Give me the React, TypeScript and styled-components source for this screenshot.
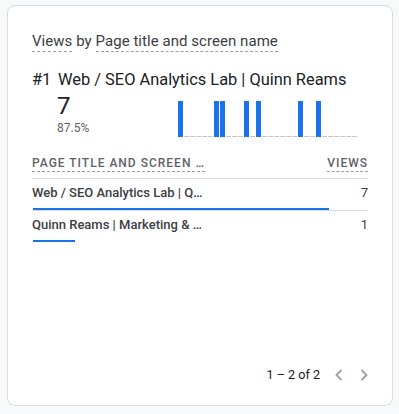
import styled, { createGlobalStyle } from 'styled-components';

const GlobalStyle = createGlobalStyle`
  body {
    margin: 0;
    background: #f8f9fa;
    font-family: Roboto, "Liberation Sans", sans-serif;
  }
`;

const rows = [
  { title: 'Web / SEO Analytics Lab | Quinn Reams', views: 7 },
  { title: 'Quinn Reams | Marketing & Analytics Portfolio', views: 1 },
];

const slots = 30;
const activeSlots = [0, 6, 7, 11, 13, 20, 23];

function Chevron({ dir }: { dir: 'left' | 'right' }) {
  return (
    <svg width="8" height="12" viewBox="0 0 8 12">
      <path
        d={dir === 'left' ? 'M6.5 1 L1.5 6 L6.5 11' : 'M1.5 1 L6.5 6 L1.5 11'}
        fill="none"
        stroke="#9aa0a6"
        strokeWidth="1.8"
      />
    </svg>
  );
}

export default function App() {
  const max = Math.max(...rows.map((r) => r.views));
  return (
    <Page>
      <GlobalStyle />
      <Card>
        <Title>
          <Dotted>Views</Dotted> by <Dotted>Page title and screen name</Dotted>
        </Title>
        <TopLine>
          <Rank>#1</Rank>
          <TopName>{rows[0].title}</TopName>
        </TopLine>
        <Summary>
          <Stats>
            <BigNumber>7</BigNumber>
            <Percent>87.5%</Percent>
          </Stats>
          <Chart>
            {Array.from({ length: slots }).map((_, i) => (
              <Slot key={i} active={activeSlots.includes(i)} />
            ))}
          </Chart>
        </Summary>
        <Table>
          <HeaderRow>
            <HeaderCell>
              <Dotted>Page title and screen …</Dotted>
            </HeaderCell>
            <HeaderCell>
              <Dotted>Views</Dotted>
            </HeaderCell>
          </HeaderRow>
          {rows.map((r, i) => (
            <Row key={r.title} last={i === rows.length - 1}>
              <RowLine>
                <RowName title={r.title}>{r.title}</RowName>
                <RowValue>{r.views}</RowValue>
              </RowLine>
              <Bar style={{ width: `${(r.views / max) * 88}%` }} />
            </Row>
          ))}
        </Table>
        <Pager>
          <PagerText>1 – 2 of 2</PagerText>
          <PagerButton>
            <Chevron dir="left" />
          </PagerButton>
          <PagerButton>
            <Chevron dir="right" />
          </PagerButton>
        </Pager>
      </Card>
    </Page>
  );
}

const Page = styled.div`
  padding: 5px 7px 8px 7px;
`;

const Card = styled.div`
  box-sizing: border-box;
  width: 386px;
  height: 401px;
  background: #fff;
  border: 1px solid #dadce0;
  border-radius: 8px;
  padding: 25px 24px 22px 24px;
  display: flex;
  flex-direction: column;
`;

const Dotted = styled.span`
  border-bottom: 1px dashed #9aa0a6;
  padding-bottom: 1px;
`;

const Title = styled.div`
  font-size: 15px;
  line-height: 20px;
  color: #3c4043;
  letter-spacing: 0.05px;
`;

const TopLine = styled.div`
  display: flex;
  margin-top: 18px;
  font-size: 16.4px;
  line-height: 22px;
  color: #202124;
`;

const Rank = styled.span`
  width: 26px;
`;

const TopName = styled.span``;

const Summary = styled.div`
  display: flex;
  align-items: flex-start;
  margin-top: 1px;
  padding-left: 25px;
`;

const Stats = styled.div`
  width: 121px;
  display: flex;
  flex-direction: column;
`;

const BigNumber = styled.div`
  font-size: 24px;
  line-height: 28px;
  color: #202124;
`;

const Percent = styled.div`
  font-size: 12px;
  line-height: 14px;
  color: #5f6368;
  margin-top: 1px;
`;

const Chart = styled.div`
  display: flex;
  align-items: flex-end;
  height: 36px;
  margin-top: 9px;
`;

const Slot = styled.div<{ active: boolean }>`
  width: 5px;
  margin-right: 1px;
  height: ${(p) => (p.active ? '36px' : '1px')};
  background: ${(p) => (p.active ? '#1a73e8' : '#c4c7c5')};
`;

const Table = styled.div`
  margin-top: 18px;
  display: flex;
  flex-direction: column;
`;

const HeaderRow = styled.div`
  display: flex;
  justify-content: space-between;
  padding-bottom: 7px;
  border-bottom: 1px solid #dadce0;
`;

const HeaderCell = styled.div`
  font-size: 12px;
  line-height: 16px;
  font-weight: 500;
  letter-spacing: 1px;
  text-transform: uppercase;
  color: #5f6368;
`;

const Row = styled.div<{ last: boolean }>`
  display: flex;
  flex-direction: column;
  padding-top: 6px;
  border-bottom: ${(p) => (p.last ? 'none' : '1px solid #dadce0')};
`;

const RowLine = styled.div`
  display: flex;
  justify-content: space-between;
  font-size: 13px;
  line-height: 16px;
  color: #3c4043;
`;

const RowName = styled.span`
  font-weight: 500;
  width: 172px;
  white-space: nowrap;
  overflow: hidden;
  text-overflow: ellipsis;
`;

const RowValue = styled.span``;

const Bar = styled.div`
  height: 2px;
  background: #1a73e8;
  margin-top: 7px;
  margin-left: 1px;
`;

const Pager = styled.div`
  margin-top: auto;
  display: flex;
  align-items: center;
  justify-content: flex-end;
  height: 16px;
`;

const PagerText = styled.span`
  font-size: 12.6px;
  line-height: 16px;
  color: #202124;
  margin-right: 15px;
`;

const PagerButton = styled.span`
  display: flex;
  & + & {
    margin-left: 17px;
  }
`;
